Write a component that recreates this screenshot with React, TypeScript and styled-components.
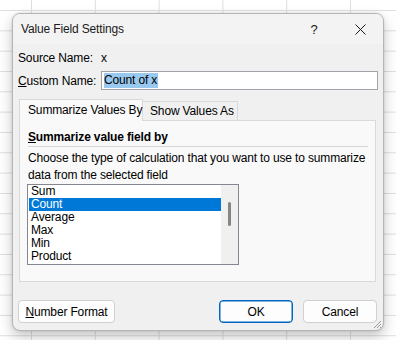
import styled, { createGlobalStyle } from "styled-components";

const GlobalStyle = createGlobalStyle`
  html, body {
    margin: 0;
    padding: 0;
  }
  body {
    font-family: "Liberation Sans", Arial, sans-serif;
    font-size: 12px;
    letter-spacing: -0.15px;
    color: #000;
  }
`;

const Page = styled.div`
  width: 396px;
  height: 340px;
  box-sizing: border-box;
  padding: 13px 0 0 12px;
  overflow: hidden;
  background-color: #fff;
  background-image: linear-gradient(to right, #dedede 1px, transparent 1px),
    linear-gradient(to bottom, #dedede 1px, transparent 1px);
  background-size: 63.8px 20.33px;
  background-position: 31px 10px;
`;

const Dialog = styled.div`
  position: relative;
  width: 372px;
  height: 318px;
  box-sizing: border-box;
  border: 1px solid #b5b5b5;
  border-radius: 8px;
  background: #f0f0f0;
  box-shadow: 0 6px 14px rgba(0, 0, 0, 0.22), 0 0 3px rgba(0, 0, 0, 0.12);
  overflow: hidden;
  display: flex;
  flex-direction: column;
  white-space: nowrap;
`;

const TitleBar = styled.div`
  height: 30px;
  display: flex;
  align-items: center;
  background: #f3f3f3;
  flex-shrink: 0;
`;

const Title = styled.div`
  flex: 1;
  padding-left: 8px;
  color: #1a1a1a;
`;

const CaptionButton = styled.div`
  width: 46px;
  height: 30px;
  display: flex;
  align-items: center;
  justify-content: center;
  color: #1a1a1a;
  font-size: 13px;
`;

const Body = styled.div`
  flex: 1;
  display: flex;
  flex-direction: column;
  padding: 4px 5px 0 5px;
`;

const FieldRow = styled.div<{ $top: number }>`
  display: flex;
  align-items: center;
  margin-top: ${(p) => p.$top}px;
  height: 19px;
`;

const Label = styled.div`
  width: 83px;
  flex-shrink: 0;
`;

const NameInput = styled.div`
  width: 277px;
  height: 19px;
  box-sizing: border-box;
  border: 1px solid #a3a3ab;
  background: #fff;
  padding: 0 2px;
  display: flex;
  align-items: center;
`;

const Selected = styled.span`
  background: #99c9ef;
  line-height: 15px;
  padding-right: 1px;
`;

const TabList = styled.div`
  display: flex;
  align-items: flex-end;
  margin-top: 9px;
  margin-left: 1px;
  height: 21px;
`;

const Tab = styled.div<{ $active?: boolean; $width: number }>`
  width: ${(p) => p.$width}px;
  height: ${(p) => (p.$active ? 22 : 19)}px;
  box-sizing: border-box;
  border: 1px solid #d9d9d9;
  border-bottom: none;
  ${(p) => (p.$active ? "" : "border-left: none;")}
  background: ${(p) => (p.$active ? "#f9f9f9" : "#f0f0f0")};
  margin-bottom: ${(p) => (p.$active ? -1 : 0)}px;
  position: relative;
  z-index: ${(p) => (p.$active ? 1 : 0)};
  display: flex;
  align-items: center;
  padding-left: ${(p) => (p.$active ? 8 : 7)}px;
  padding-bottom: ${(p) => (p.$active ? 2 : 0)}px;
`;

const Panel = styled.div`
  width: 357px;
  height: 162px;
  margin-left: 1px;
  box-sizing: border-box;
  border: 1px solid #d9d9d9;
  background: #f9f9f9;
  padding: 0 7px 0 8px;
  display: flex;
  flex-direction: column;
`;

const Heading = styled.div`
  margin-top: 8px;
  line-height: 16px;
  font-weight: 700;
`;

const Divider = styled.div`
  height: 1px;
  background: #d6d6d6;
  margin-top: 1px;
`;

const Description = styled.div`
  margin-top: 3px;
  line-height: 17px;
`;

const ListBox = styled.div`
  width: 212px;
  height: 81px;
  margin-left: -1px;
  box-sizing: border-box;
  border: 1px solid #828790;
  background: #fff;
  display: flex;
`;

const Items = styled.div`
  flex: 1;
  padding: 0 0 0 1px;
`;

const Item = styled.div<{ $selected?: boolean }>`
  height: 13px;
  line-height: 13px;
  padding-left: 2px;
  background: ${(p) => (p.$selected ? "#0078d7" : "transparent")};
  color: ${(p) => (p.$selected ? "#fff" : "#000")};
`;

const ScrollTrack = styled.div`
  width: 17px;
  background: #f0f0f0;
  position: relative;
`;

const ScrollThumb = styled.div`
  position: absolute;
  left: 7px;
  top: 17px;
  width: 3px;
  height: 24px;
  border-radius: 2px;
  background: #858585;
`;

const ButtonRow = styled.div`
  display: flex;
  align-items: center;
  gap: 10px;
  margin-top: 18px;
  padding: 0 1px 0 0;
`;

const Button = styled.div<{ $primary?: boolean; $width: number }>`
  width: ${(p) => p.$width}px;
  height: 23px;
  box-sizing: border-box;
  border: 1px solid ${(p) => (p.$primary ? "#0067c0" : "#d0d0d0")};
  ${(p) => (p.$primary ? "box-shadow: inset 0 0 0 0.5px #0067c0;" : "")}
  border-radius: 4px;
  background: #fdfdfd;
  display: flex;
  align-items: center;
  justify-content: center;
`;

const Spacer = styled.div`
  flex: 1;
`;

const Grip = styled.svg`
  position: absolute;
  right: 1px;
  bottom: 1px;
`;

const items = ["Sum", "Count", "Average", "Max", "Min", "Product"];

export default function App() {
  return (
    <>
      <GlobalStyle />
      <Page>
        <Dialog>
          <TitleBar>
            <Title>Value Field Settings</Title>
            <CaptionButton>?</CaptionButton>
            <CaptionButton>
              <svg width="11" height="11" viewBox="0 0 11 11">
                <path d="M0.5 0.5 L10.5 10.5 M10.5 0.5 L0.5 10.5" stroke="#1a1a1a" strokeWidth="1" />
              </svg>
            </CaptionButton>
          </TitleBar>
          <Body>
            <FieldRow $top={0}>
              <Label>Source Name:</Label>
              <span>x</span>
            </FieldRow>
            <FieldRow $top={4}>
              <Label>
                <u>C</u>ustom Name:
              </Label>
              <NameInput>
                <Selected>Count of x</Selected>
              </NameInput>
            </FieldRow>
            <TabList>
              <Tab $active $width={124}>Summarize Values By</Tab>
              <Tab $width={95}>Show Values As</Tab>
            </TabList>
            <Panel>
              <Heading>
                <u>S</u>ummarize value field by
              </Heading>
              <Divider />
              <Description>
                Choose the type of calculation that you want to use to summarize
                <br />
                data from the selected field
              </Description>
              <ListBox>
                <Items>
                  {items.map((it) => (
                    <Item key={it} $selected={it === "Count"}>
                      {it}
                    </Item>
                  ))}
                </Items>
                <ScrollTrack>
                  <ScrollThumb />
                </ScrollTrack>
              </ListBox>
            </Panel>
            <ButtonRow>
              <Button $width={97}>
                <span>
                  <u>N</u>umber Format
                </span>
              </Button>
              <Spacer />
              <Button $primary $width={74}>OK</Button>
              <Button $width={74}>Cancel</Button>
            </ButtonRow>
          </Body>
          <Grip width="9" height="9" viewBox="0 0 9 9">
            <path d="M8 1 L1 8 M8 4 L4 8 M8 7 L7 8" stroke="#9a9a9a" strokeWidth="1" />
          </Grip>
        </Dialog>
      </Page>
    </>
  );
}
